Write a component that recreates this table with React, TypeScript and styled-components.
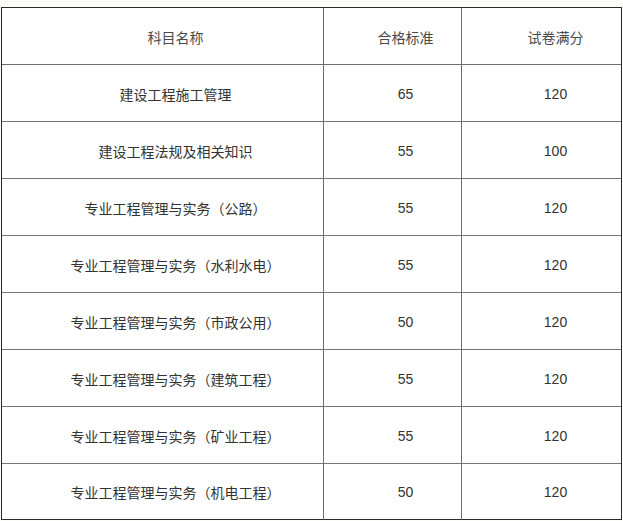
import React from 'react';
import styled, { createGlobalStyle } from 'styled-components';

const GlobalStyle = createGlobalStyle`
  html, body {
    margin: 0;
    padding: 0;
    background: #fbfcfa;
  }
  body {
    font-family: 'Liberation Sans', 'Noto Sans CJK SC', sans-serif;
  }
`;

const Page = styled.div`
  width: 623px;
  height: 521px;
  padding: 7px 0 0 1px;
  box-sizing: border-box;
  overflow: hidden;
`;

const Table = styled.div`
  width: 621px;
  display: grid;
  grid-template-columns: 322px 138px 1fr;
  grid-template-rows: repeat(8, 57px) 56px;
  border: 1px solid #2a2a2a;
  border-bottom: none;
  box-sizing: border-box;
  background: #fefffe;
`;

const Cell = styled.div<{ $head?: boolean; $last?: boolean }>`
  display: flex;
  align-items: center;
  justify-content: center;
  padding: 1px 0 0 ${p => (p.$last ? 28 : 26)}px;
  box-sizing: border-box;
  border-bottom: 1px solid ${p => (p.$head ? '#6e6e6e' : '#767676')};
  border-right: 1px solid #6e6e6e;
  font-size: 14px;
  color: ${p => (p.$head ? '#4a4a4a' : '#333333')};
  white-space: nowrap;

  &:nth-child(3n) {
    border-right: none;
  }
`;

const LastCell = styled(Cell)`
  border-bottom-color: #2a2a2a;
`;

interface Row {
  name: string;
  pass: number;
  full: number;
}

const rows: Row[] = [
  { name: '建设工程施工管理', pass: 65, full: 120 },
  { name: '建设工程法规及相关知识', pass: 55, full: 100 },
  { name: '专业工程管理与实务（公路）', pass: 55, full: 120 },
  { name: '专业工程管理与实务（水利水电）', pass: 55, full: 120 },
  { name: '专业工程管理与实务（市政公用）', pass: 50, full: 120 },
  { name: '专业工程管理与实务（建筑工程）', pass: 55, full: 120 },
  { name: '专业工程管理与实务（矿业工程）', pass: 55, full: 120 },
  { name: '专业工程管理与实务（机电工程）', pass: 50, full: 120 },
];

const App: React.FC = () => {
  return (
    <Page>
      <GlobalStyle />
      <Table>
        <Cell $head>科目名称</Cell>
        <Cell $head>合格标准</Cell>
        <Cell $head $last>试卷满分</Cell>
        {rows.map((row, i) => {
          const C = i === rows.length - 1 ? LastCell : Cell;
          return (
            <React.Fragment key={row.name}>
              <C>{row.name}</C>
              <C>{row.pass}</C>
              <C $last>{row.full}</C>
            </React.Fragment>
          );
        })}
      </Table>
    </Page>
  );
};

export default App;
